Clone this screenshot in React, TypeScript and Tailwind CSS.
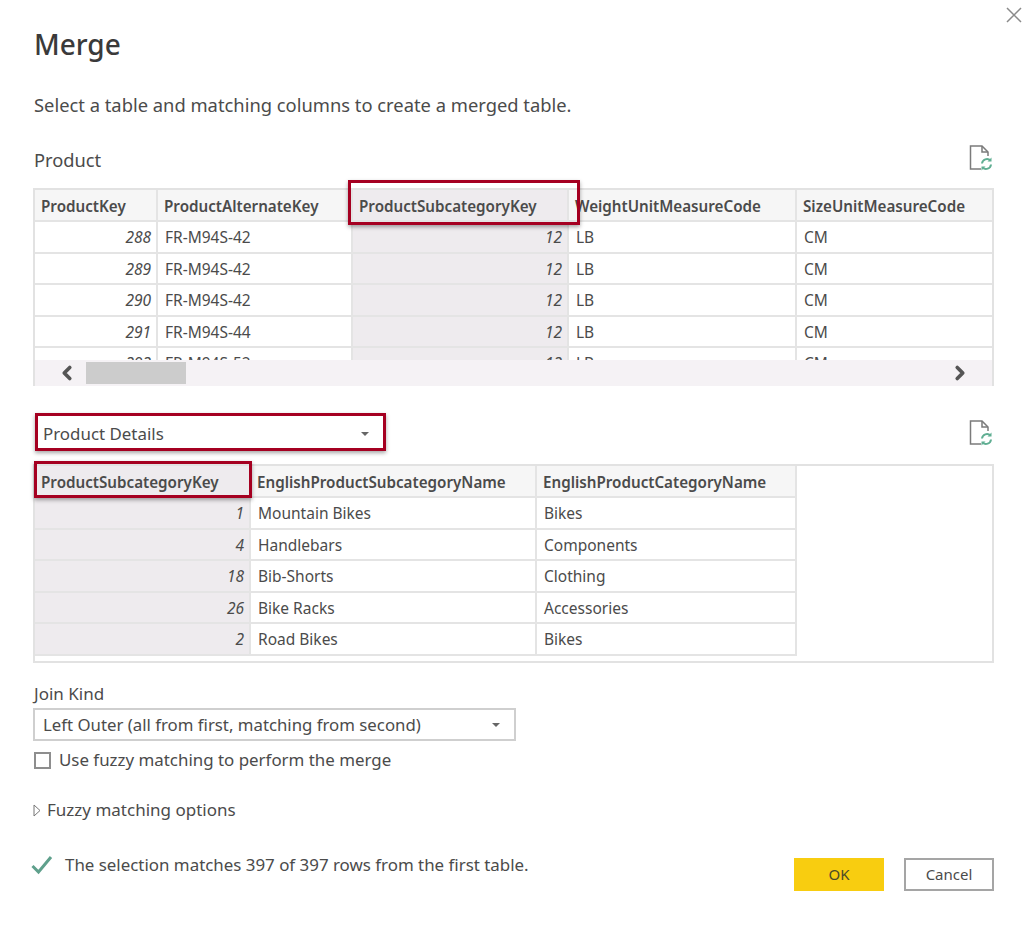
import { ChevronLeft, ChevronRight } from 'lucide-react';

interface Column {
    name: string;
    width: string;
    numeric?: boolean;
    selected?: boolean;
}

interface DataTableProps {
    columns: Column[];
    rows: string[][];
    bodyClass: string;
}

function FileRefreshIcon() {
    return (
        <svg width="24" height="26" viewBox="0 0 24 26" fill="none">
            <path d="M19 11V7l-6-6H1.500v23H12" stroke="#7b7b7b" strokeWidth="1.500" />
            <path d="M13 1v6h6" stroke="#7b7b7b" strokeWidth="1.500" />
            <path d="M13 18.500a5 5 0 0 1 8.500-3" stroke="#5fae92" strokeWidth="2" />
            <path d="M22.500 12.500v4h-4z" fill="#5fae92" />
            <path d="M22 19.500a5 5 0 0 1-8.500 3" stroke="#5fae92" strokeWidth="2" />
            <path d="M12.500 25.500v-4h4z" fill="#5fae92" />
        </svg>
    );
}

function DropdownArrow() {
    return <span className="w-0 h-0 border-x-[4.500px] border-x-transparent border-t-[4.500px] border-t-[#666666]" />;
}

function RedBox({ className }: { className: string }) {
    return <div className={`absolute border-[3px] border-[#a50021] shadow-[0_2px_4px_rgba(0,0,0,0.35)] ${className}`} />;
}

function DataTable({ columns, rows, bodyClass }: DataTableProps) {
    return (
        <div className={`overflow-hidden ${bodyClass}`}>
            <div className="flex w-fit h-[32px] border-b-2 border-[#e4e4e4]">
                {columns.map((col) => (
                    <div
                        key={col.name}
                        className={`${col.width} shrink-0 pl-[6px] pr-[4px] pt-[2px] border-r-2 border-[#e4e4e4] text-[15.200px] font-semibold flex items-center whitespace-nowrap ${col.selected ? 'bg-[#eeebee]' : 'bg-[#f6f6f6]'}`}
                    >
                        {col.name}
                    </div>
                ))}
            </div>
            {rows.map((row, i) => (
                <div key={i} className="flex w-fit h-[31.500px] border-b-2 border-[#e4e4e4]">
                    {columns.map((col, j) => (
                        <div
                            key={col.name}
                            className={`${col.width} shrink-0 pt-[2px] border-r-2 border-[#e4e4e4] flex items-center whitespace-nowrap ${col.numeric ? 'justify-end italic pr-[5px]' : 'pl-[7px]'} ${col.selected ? 'bg-[#eeebee]' : 'bg-white'}`}
                        >
                            {row[j]}
                        </div>
                    ))}
                </div>
            ))}
        </div>
    );
}

const productColumns: Column[] = [
    { name: 'ProductKey', width: 'w-[123px]', numeric: true },
    { name: 'ProductAlternateKey', width: 'w-[195px]' },
    { name: 'ProductSubcategoryKey', width: 'w-[216px]', numeric: true, selected: true },
    { name: 'WeightUnitMeasureCode', width: 'w-[228px]' },
    { name: 'SizeUnitMeasureCode', width: 'w-[197px]' },
];

const productRows = [
    ['288', 'FR-M94S-42', '12', 'LB', 'CM'],
    ['289', 'FR-M94S-42', '12', 'LB', 'CM'],
    ['290', 'FR-M94S-42', '12', 'LB', 'CM'],
    ['291', 'FR-M94S-44', '12', 'LB', 'CM'],
    ['292', 'FR-M94S-52', '12', 'LB', 'CM'],
];

const detailColumns: Column[] = [
    { name: 'ProductSubcategoryKey', width: 'w-[216px]', numeric: true, selected: true },
    { name: 'EnglishProductSubcategoryName', width: 'w-[286px]' },
    { name: 'EnglishProductCategoryName', width: 'w-[260px]' },
];

const detailRows = [
    ['1', 'Mountain Bikes', 'Bikes'],
    ['4', 'Handlebars', 'Components'],
    ['18', 'Bib-Shorts', 'Clothing'],
    ['26', 'Bike Racks', 'Accessories'],
    ['2', 'Road Bikes', 'Bikes'],
];

export default function App() {
    return (
        <div className="relative w-[1030px] h-[925px] bg-white overflow-hidden pl-[33px] pr-[36px] pt-[25px] text-[#4b4b4b] text-[15.500px] font-['Noto_Sans',sans-serif]">
            {/* Close */}
            <svg className="absolute top-[7px] right-[8px]" width="16" height="16" viewBox="0 0 16 16" stroke="#8a8a8a" strokeWidth="1.500">
                <path d="M1 1l14 14M15 1L1 15" />
            </svg>

            <h1 className="text-[28px] leading-[38px] font-medium text-[#3a3a3a] pl-px">Merge</h1>
            <p className="mt-[30px] text-[18.350px] leading-[24px] pl-px">Select a table and matching columns to create a merged table.</p>

            <div className="mt-[31px] h-[40px] flex items-start justify-between">
                <span className="text-[18.300px] leading-[24px] pl-px">Product</span>
                <span className="-mt-[3px] mr-[1px]"><FileRefreshIcon /></span>
            </div>

            {/* First table */}
            <div className="relative border-2 border-[#e2e2e2] h-[198px] w-[961px]">
                <div className="h-[170px]">
                    <DataTable columns={productColumns} rows={productRows} bodyClass="h-[170px]" />
                </div>
                <div className="h-[26px] bg-[#f5f2f5] flex items-center relative">
                    <ChevronLeft className="absolute left-[21px] top-[2px] text-[#555555]" size={22} strokeWidth={4} />
                    <div className="ml-[51px] w-[100px] h-[22px] bg-[#cccccc]" />
                    <ChevronRight className="absolute right-[21px] top-[2px] text-[#555555]" size={22} strokeWidth={4} />
                </div>
                <RedBox className="left-[313px] top-[-10px] w-[232px] h-[45px]" />
            </div>

            {/* Second table picker */}
            <div className="mt-[27px] flex items-start justify-between">
                <div className="relative ml-[2px] w-[351px] h-[38px] border border-[#a8a8a8] flex items-center justify-between pl-[7px] pr-[16px] pt-[3px] text-[16.900px]">
                    <span>Product Details</span>
                    <DropdownArrow />
                    <RedBox className="-inset-[1px]" />
                </div>
                <span className="mt-[7px] mr-[1px]"><FileRefreshIcon /></span>
            </div>

            <div className="relative mt-[13px] border-2 border-[#e2e2e2] h-[199px] w-[961px]">
                <DataTable columns={detailColumns} rows={detailRows} bodyClass="h-[195px]" />
                <RedBox className="-left-[1px] -top-[5px] w-[218px] h-[37px]" />
            </div>

            {/* Join kind */}
            <div className="mt-[19px] text-[17px] leading-[24px] pl-px">Join Kind</div>
            <div className="mt-[2px] w-[483px] h-[33px] border-2 border-[#cfcfcf] flex items-center justify-between pl-[8px] pr-[14px] text-[16.800px]">
                <span>Left Outer (all from first, matching from second)</span>
                <DropdownArrow />
            </div>
            <label className="mt-[7px] ml-px flex items-center gap-[8px] text-[16.900px] leading-[24px]">
                <span className="w-[17px] h-[17px] border-2 border-[#8e8e8e]" />
                Use fuzzy matching to perform the merge
            </label>

            <div className="mt-[26px] flex items-center gap-[6px] text-[17px] leading-[24px]">
                <svg width="8" height="13" viewBox="0 0 8 13" fill="none" stroke="#777777" strokeWidth="1">
                    <path d="M1 1l6 5.500-6 5.500z" />
                </svg>
                Fuzzy matching options
            </div>

            {/* Footer */}
            <div className="mt-[31px] flex items-start justify-between">
                <div className="-ml-[2px] flex items-center gap-[12px] text-[16.900px] leading-[24px]">
                    <svg width="22" height="20" viewBox="0 0 22 20" fill="none" stroke="#5fa08c" strokeWidth="3">
                        <path d="M1.500 11l6 6L20 2" />
                    </svg>
                    The selection matches 397 of 397 rows from the first table.
                </div>
                <div className="flex gap-[20px] mt-[5px]">
                    <button className="w-[90px] h-[33px] bg-[#f8cd10] text-[15px] text-[#4a4a2a]">OK</button>
                    <button className="w-[90px] h-[33px] border-2 border-[#a5a5a5] bg-white text-[15px]">Cancel</button>
                </div>
            </div>
        </div>
    );
}
